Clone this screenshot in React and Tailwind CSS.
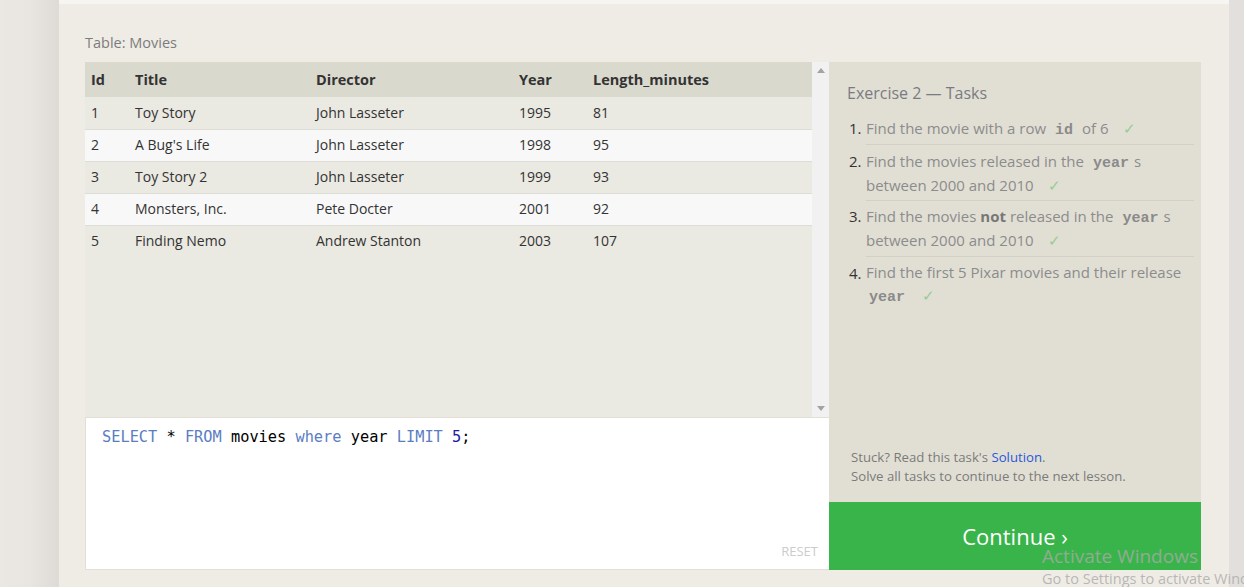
import React from "react";

const rows = [
  ["1", "Toy Story", "John Lasseter", "1995", "81"],
  ["2", "A Bug's Life", "John Lasseter", "1998", "95"],
  ["3", "Toy Story 2", "John Lasseter", "1999", "93"],
  ["4", "Monsters, Inc.", "Pete Docter", "2001", "92"],
  ["5", "Finding Nemo", "Andrew Stanton", "2003", "107"],
];

const widths = ["w-[44px]", "w-[181px]", "w-[203px]", "w-[74px]", "flex-1"];

const Check = ({ gap = "ml-[14px]" }) => <span className={gap + " text-[#94cc94] leading-none"}>✓</span>;
const Code = ({ children, cls = "mx-[9px]" }) => (
  <code className={"font-['Liberation_Mono',monospace] font-bold text-[#8a8a8a] text-[15px] leading-none " + cls}>{children}</code>
);

export default function App() {
  return (
    <div className="w-[1244px] h-[587px] overflow-hidden flex bg-[#ebe7e3] font-['Open_Sans',sans-serif] relative">
      <div className="w-[59px] h-full bg-gradient-to-r from-[#ebe7e3] via-[#e9e5e1] to-[#dedad6]" />
      <div className="w-[1170px] h-full bg-[#efece5] flex flex-col">
        <div className="h-[4px] bg-[#f6f5f1]" />
        <div className="pl-[26px] pt-[28px]">
          <div className="text-[14.5px] leading-[22px] text-[#7c7c7c] h-[30px]">Table: Movies</div>
          <div className="flex w-[1116px] h-[508px]">
            <div className="w-[744px] flex flex-col">
              <div className="h-[355px] flex bg-[#eae9e2]">
                <div className="w-[727px] h-full text-[14px] text-[#333]">
                  <div className="flex h-[35px] items-center bg-[#dad9ce] font-bold text-[14.5px]">
                    {["Id", "Title", "Director", "Year", "Length_minutes"].map((h, j) => (
                      <div key={j} className={widths[j] + " pl-[6px]"}>{h}</div>
                    ))}
                  </div>
                  {rows.map((r, i) => (
                    <div
                      key={i}
                      className={
                        (i % 2 === 0 ? "bg-[#eae9e2]" : "bg-[#f8f8f8]") +
                        (i > 0 ? " border-t border-[#dddcd6]" : "") +
                        " flex items-center h-[32px] pb-[2px]"
                      }
                    >
                      {r.map((c, j) => (
                        <div key={j} className={widths[j] + " pl-[6px]"}>{c}</div>
                      ))}
                    </div>
                  ))}
                </div>
                <div className="w-[17px] h-full bg-[#f1f1f1] flex flex-col justify-between items-center py-[6px]">
                  <svg width="8" height="5" viewBox="0 0 8 5"><path d="M0 5 L4 0 L8 5Z" fill="#a3a3a3" /></svg>
                  <svg width="8" height="5" viewBox="0 0 8 5"><path d="M0 0 L4 5 L8 0Z" fill="#a3a3a3" /></svg>
                </div>
              </div>
              <div className="h-[153px] bg-white border border-[#e2dfd6] border-r-0 relative">
                <div className="pl-[16px] pt-[9px] font-['DejaVu_Sans_Mono',monospace] text-[15.3px] leading-[20px] text-black">
                  <span className="text-[#5b7dc2]">SELECT</span> * <span className="text-[#5b7dc2]">FROM</span> movies{" "}
                  <span className="text-[#5b7dc2]">where</span> year <span className="text-[#5b7dc2]">LIMIT</span>{" "}
                  <span className="text-[#1c1ca8]">5</span>;
                </div>
                <div className="absolute right-[11px] bottom-[8px] text-[13px] text-[#cccccc]">RESET</div>
              </div>
            </div>
            <div className="w-[372px] flex flex-col">
              <div className="h-[440px] bg-[#e1dfd4] pl-[18px] pr-[7px] pt-[20px] flex flex-col">
                <div className="text-[16px] leading-[22px] text-[#7a7b82]">Exercise 2 — Tasks</div>
                <div className="mt-[12px] text-[15px] leading-[24px] text-[#8c8c8c]">
                  <div className="flex ml-[2px]">
                    <span className="text-[#333] w-[17px] shrink-0">1.</span>
                    <div className="flex-1 border-b border-[#d3d1c6] pb-[4px]">
                      Find the movie with a row<Code>id</Code>of 6<Check />
                    </div>
                  </div>
                  <div className="flex ml-[2px]">
                    <span className="text-[#333] w-[17px] shrink-0 pt-[4px]">2.</span>
                    <div className="flex-1 border-b border-[#d3d1c6] pt-[4px] pb-[3px]">
                      Find the movies released in the<Code cls="ml-[9px] mr-[5px]">year</Code>s<br />between 2000 and 2010<Check />
                    </div>
                  </div>
                  <div className="flex ml-[2px]">
                    <span className="text-[#333] w-[17px] shrink-0 pt-[3px]">3.</span>
                    <div className="flex-1 border-b border-[#d3d1c6] pt-[3px] pb-[4px]">
                      Find the movies <b className="text-[#777]">not</b> released in the<Code cls="ml-[9px] mr-[5px]">year</Code>s<br />between 2000 and 2010<Check />
                    </div>
                  </div>
                  <div className="flex ml-[2px]">
                    <span className="text-[#333] w-[17px] shrink-0 pt-[4px]">4.</span>
                    <div className="flex-1 pt-[4px] leading-[23px]">
                      Find the first 5 Pixar movies and their release<br /><Code cls="ml-[3px]">year</Code><Check gap="ml-[17px]" />
                    </div>
                  </div>
                </div>
                <div className="mt-auto pb-[16px] pl-[4px] text-[13.2px] leading-[19px] text-[#7b7b7b]">
                  <div>Stuck? Read this task's <span className="text-[#2b57d9]">Solution</span>.</div>
                  <div>Solve all tasks to continue to the next lesson.</div>
                </div>
              </div>
              <div className="h-[68px] bg-[#39b44a] flex items-center justify-center text-white text-[22px]">
                Continue ›
              </div>
            </div>
          </div>
        </div>
      </div>
      <div className="flex-1 h-full bg-[#e3dfdc]" />
      <div className="absolute left-[1042px] top-[543px] text-[#a9a9a9]/80 font-['Open_Sans',sans-serif] whitespace-nowrap pointer-events-none">
        <div className="text-[19px] leading-[26px]">Activate Windows</div>
        <div className="text-[14.5px] leading-[20px]">Go to Settings to activate Windows.</div>
      </div>
    </div>
  );
}
